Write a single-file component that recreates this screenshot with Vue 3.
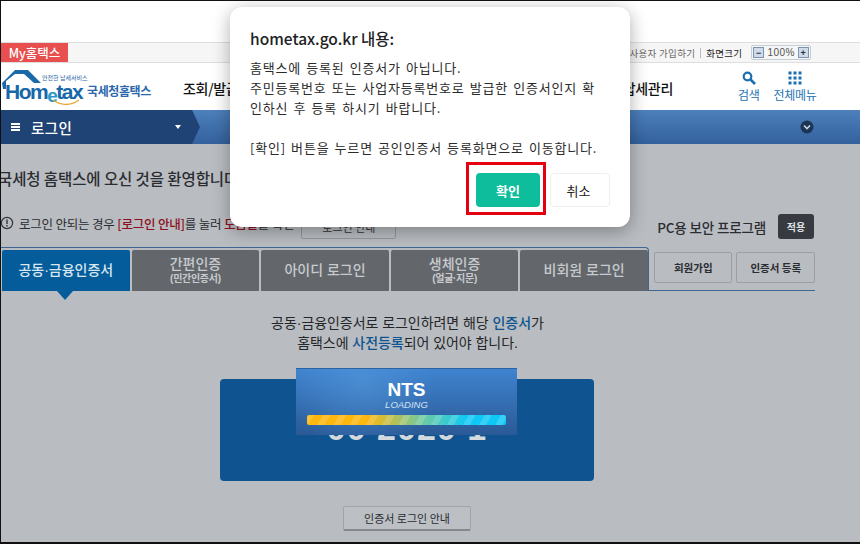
<template>
  <div class="screen">
    <div class="blank"></div>

    <div class="util-bar">
      <div class="my-tab">My홈택스</div>
      <div class="util-right">
        <span class="util-link">사용자 가입하기</span>
        <span class="util-sep"></span>
        <span class="util-size">화면크기</span>
        <span class="zoom-box">
          <span class="zoom-btn">−</span>
          <span class="zoom-val">100%</span>
          <span class="zoom-btn">+</span>
        </span>
      </div>
    </div>

    <header class="header">
      <div class="logo">
        <svg class="logo-house" width="42" height="22" viewBox="0 0 42 22">
          <path d="M1 15 L14 2 L27 2 L40 15 L33 15 L23 6 L14 6 L5 13 L5 21 L2 21 Z" fill="#1a6aa8" />
        </svg>
        <span class="logo-tag">안전한 납세서비스</span>
        <span class="logo-word">Hom<i>e</i>tax</span>
        <svg class="logo-smile" width="30" height="8" viewBox="0 0 30 8">
          <path d="M2 1 Q15 10 28 1" fill="none" stroke="#e9a93c" stroke-width="1.4" />
        </svg>
        <span class="logo-name">국세청홈택스</span>
      </div>
      <nav class="menu">
        <span v-for="m in menus" :key="m">{{ m }}</span>
      </nav>
      <div class="tools">
        <div class="tool">
          <svg width="14" height="14" viewBox="0 0 14 14">
            <circle cx="5.5" cy="5.5" r="3.8" fill="none" stroke="#1a6fb0" stroke-width="2.2" />
            <path d="M8.5 8.5 L13 13" stroke="#1a6fb0" stroke-width="2.6" />
          </svg>
          <span>검색</span>
        </div>
        <div class="tool">
          <svg width="14" height="14" viewBox="0 0 14 14" fill="#1a6fb0">
            <rect v-for="d in dots" :key="d.k" :x="d.x" :y="d.y" width="3" height="3" />
          </svg>
          <span>전체메뉴</span>
        </div>
      </div>
    </header>

    <div class="nav-bar">
      <div class="nav-login">
        <span class="burger"><i></i><i></i><i></i></span>
        <span class="nav-title">로그인</span>
        <span class="caret"></span>
      </div>
      <div class="nav-more">
        <svg width="14" height="14" viewBox="0 0 14 14">
          <circle cx="7" cy="7" r="6.5" fill="#1d3555" />
          <path d="M4 5.5 L7 8.5 L10 5.5" fill="none" stroke="#c9d5e4" stroke-width="1.6" />
        </svg>
      </div>
    </div>

    <main class="content">
      <h2 class="welcome">국세청 홈택스에 오신 것을 환영합니다</h2>

      <div class="info-row">
        <div class="info-left">
          <svg width="14" height="14" viewBox="0 0 14 14">
            <circle cx="6" cy="7" r="5.6" fill="none" stroke="#33363a" stroke-width="1.2" />
            <path d="M6 3.6 V8" stroke="#33363a" stroke-width="1.4" />
            <path d="M6 9 V10.4" stroke="#33363a" stroke-width="1.4" />
          </svg>
          <span>로그인 안되는 경우 <b>[로그인 안내]</b>를 눌러 <b>도움말</b>을 확인</span>
          <button class="guide-small">로그인 안내</button>
        </div>
        <div class="info-right">
          <span>PC용 보안 프로그램</span>
          <button class="apply">적용</button>
        </div>
      </div>

      <div class="tab-row">
        <div class="tabs">
          <div v-for="(t, i) in tabs" :key="t.main" class="tab" :class="{ active: i === 0 }">
            <span class="tab-main">{{ t.main }}</span>
            <span v-if="t.sub" class="tab-sub">{{ t.sub }}</span>
          </div>
        </div>
        <div class="tab-side">
          <button class="side-btn">회원가입</button>
          <button class="side-btn">인증서 등록</button>
        </div>
      </div>

      <p class="notice">
        공동·금융인증서로 로그인하려면 해당 <em>인증서</em>가<br />
        홈택스에 <em>사전등록</em>되어 있어야 합니다.
      </p>

      <div class="cert-wrap">
        <div class="cert-card">00 2020 1</div>
        <div class="loader">
          <div class="loader-title">NTS</div>
          <div class="loader-sub">LOADING</div>
          <div class="loader-bar"></div>
        </div>
      </div>

      <button class="guide-btn">인증서 로그인 안내</button>
    </main>

    <div class="dialog">
      <div class="dialog-title">hometax.go.kr 내용:</div>
      <div class="dialog-body">
        <p>홈택스에 등록된 인증서가 아닙니다.</p>
        <p>주민등록번호 또는 사업자등록번호로 발급한 인증서인지 확</p>
        <p>인하신 후 등록 하시기 바랍니다.</p>
        <p class="gap">[확인] 버튼을 누르면 공인인증서 등록화면으로 이동합니다.</p>
      </div>
      <div class="dialog-actions">
        <button class="ok">확인</button>
        <button class="cancel">취소</button>
      </div>
    </div>
  </div>
</template>

<script setup>
const menus = ['조회/발급', '납세관리'];

const tabs = [
  { main: '공동·금융인증서' },
  { main: '간편인증', sub: '(민간인증서)' },
  { main: '아이디 로그인' },
  { main: '생체인증', sub: '(얼굴·지문)' },
  { main: '비회원 로그인' },
];

const dots = [];
for (let r = 0; r < 3; r++) {
  for (let c = 0; c < 3; c++) {
    dots.push({ k: `${r}-${c}`, x: c * 5 + 0.5, y: r * 5 + 0.5 });
  }
}
</script>

<style>
html, body { margin: 0; background: #fff; }
</style>

<style scoped>
.screen {
  position: relative;
  width: 860px;
  height: 544px;
  box-sizing: border-box;
  border-top: 1px solid #111;
  border-left: 1px solid #111;
  border-bottom: 2px solid #111;
  overflow: hidden;
  display: flex;
  flex-direction: column;
  background: #fff;
  font-family: "Noto Sans CJK KR", "Noto Sans", sans-serif;
  color: #222;
}

button {
  font-family: inherit;
  cursor: pointer;
  padding: 0;
}

.blank { height: 41px; flex: none; }

/* top utility strip */
.util-bar {
  height: 19px;
  flex: none;
  display: flex;
  justify-content: space-between;
  background: #f6f6f6;
  border-top: 1px solid #dedede;
  border-bottom: 1px solid #dedede;
}
.my-tab {
  width: 67px;
  background: #e8504f;
  color: #fff;
  font-size: 12.5px;
  font-weight: 500;
  line-height: 20px;
  text-align: center;
}
.util-right {
  display: flex;
  align-items: center;
  font-size: 9.5px;
  letter-spacing: 0.3px;
  color: #666;
  padding-right: 49px;
}
.util-sep {
  width: 1px;
  height: 10px;
  background: #bbb;
  margin: 0 5px;
}
.util-size { color: #222; margin-right: 9px; }
.zoom-box {
  display: flex;
  align-items: center;
  gap: 3px;
  height: 13px;
  padding: 0 1px;
  border: 1px solid #c5cdd8;
  border-radius: 2px;
  font-family: "Liberation Sans", sans-serif;
  font-size: 10px;
  letter-spacing: 0.5px;
  color: #555;
}
.zoom-btn {
  width: 11px;
  height: 11px;
  line-height: 10px;
  text-align: center;
  background: #cfdbea;
  border: 1px solid #7d93ad;
  box-sizing: border-box;
  font-size: 9px;
  font-weight: 700;
  color: #234;
}

/* logo and main menu */
.header {
  height: 47px;
  flex: none;
  display: flex;
  align-items: center;
  background: #fff;
}
.logo {
  position: relative;
  width: 182px;
  height: 47px;
  flex: none;
}
.logo-house { position: absolute; left: 0; top: 5px; }
.logo-tag {
  position: absolute;
  left: 41px;
  top: 11px;
  font-size: 6px;
  line-height: 8px;
  color: #2a63a8;
}
.logo-word {
  position: absolute;
  left: 4px;
  top: 19px;
  font-family: "Liberation Sans", sans-serif;
  font-size: 21px;
  line-height: 20px;
  font-weight: 700;
  letter-spacing: -1.5px;
  color: #1668a8;
}
.logo-word i {
  font-style: normal;
  font-size: 19px;
  color: #2b97c9;
  position: relative;
  top: 3px;
}
.logo-smile { position: absolute; left: 50px; top: 36px; }
.logo-name {
  position: absolute;
  left: 86px;
  top: 19px;
  font-size: 12px;
  line-height: 18px;
  font-weight: 700;
  letter-spacing: -0.4px;
  color: #2c68ac;
  white-space: nowrap;
}
.menu {
  width: 490px;
  flex: none;
  display: flex;
  justify-content: space-between;
  padding-top: 3px;
  font-size: 14px;
  font-weight: 500;
  letter-spacing: -0.3px;
  color: #111;
  white-space: nowrap;
}
.tools {
  display: flex;
  margin-left: 65px;
  gap: 14px;
  font-size: 12px;
  color: #2273b3;
}
.tool {
  display: flex;
  flex-direction: column;
  align-items: center;
  gap: 3px;
  line-height: 14px;
  letter-spacing: -0.3px;
  white-space: nowrap;
}

/* blue navigation strip */
.nav-bar {
  height: 34px;
  flex: none;
  display: flex;
  justify-content: space-between;
  align-items: center;
  background: linear-gradient(#4d80bb, #33619d);
}
.nav-login {
  width: 199px;
  height: 34px;
  box-sizing: border-box;
  display: flex;
  align-items: center;
  padding: 0 19px 0 10px;
  background: #1e4374;
  color: #fff;
  clip-path: polygon(0 0, 191px 0, 199px 50%, 191px 100%, 0 100%);
}
.burger {
  display: flex;
  flex-direction: column;
  gap: 1.5px;
  width: 9px;
  margin-right: 11px;
}
.burger i { display: block; height: 1.5px; background: #fff; }
.nav-title {
  font-size: 14.5px;
  font-weight: 500;
  letter-spacing: 0.4px;
  flex: 1;
}
.caret {
  width: 0;
  height: 0;
  border-left: 3.5px solid transparent;
  border-right: 3.5px solid transparent;
  border-top: 4px solid #fff;
}
.nav-more {
  display: flex;
  padding-right: 46px;
}

/* page body */
.content {
  flex: 1;
  background: #b9bcc0;
  display: flex;
  flex-direction: column;
  min-height: 0;
}
.welcome {
  margin: 0 0 0 -3px;
  padding-top: 23px;
  font-size: 15.5px;
  line-height: 22px;
  font-weight: 500;
  letter-spacing: -0.1px;
  color: #2a2d31;
  white-space: nowrap;
}
.info-row {
  height: 54px;
  margin-top: 4px;
  display: flex;
  justify-content: space-between;
  align-items: flex-end;
  padding-right: 46px;
  box-sizing: border-box;
}
.info-left {
  display: flex;
  align-items: center;
  gap: 4px;
  font-size: 12.5px;
  color: #2a2d31;
  letter-spacing: -0.2px;
  white-space: nowrap;
  margin-bottom: 8px;
}
.info-left b { font-weight: 500; color: #8d1020; }
.guide-small {
  width: 95px;
  height: 24px;
  margin: 8px 0 0 3px;
  font-size: 11px;
  color: #333;
  background: #b9bcc0;
  border: 1px solid #95989c;
  border-radius: 2px;
}
.info-right {
  display: flex;
  align-items: center;
  gap: 12px;
  font-size: 13.5px;
  font-weight: 500;
  color: #2a2d31;
  margin-bottom: 8px;
  letter-spacing: -0.15px;
}
.apply {
  width: 36px;
  height: 25px;
  background: #373b41;
  color: #dfe1e4;
  border: none;
  border-radius: 3px;
  font-size: 10px;
  font-weight: 700;
}

.tab-row {
  display: flex;
  align-items: stretch;
  margin-right: 45px;
  height: 44px;
  box-sizing: border-box;
}
.tabs {
  position: relative;
  display: flex;
  gap: 2px;
  padding: 2px 0 0 1px;
  border-top: 1px solid #3d6790;
  border-right: 1px solid #3d6790;
  border-radius: 0 4px 0 0;
  box-sizing: border-box;
  height: 44px;
}
.tab {
  width: 127.6px;
  height: 41px;
  flex: none;
  display: flex;
  flex-direction: column;
  align-items: center;
  justify-content: center;
  background: #63676c;
  border-radius: 2px 2px 0 0;
  color: #c8cbce;
  font-family: "Liberation Sans", "Noto Sans CJK KR", sans-serif;
}
.tab.active {
  position: relative;
  background: #045c9b;
  color: #d8e6f0;
}
.tab.active::after {
  content: "";
  position: absolute;
  left: 55px;
  top: 41px;
  border-left: 8px solid transparent;
  border-right: 8px solid transparent;
  border-top: 9px solid #045c9b;
}
.tab-main {
  font-size: 14px;
  font-weight: 500;
  line-height: 17px;
}
.tab-sub {
  font-size: 10px;
  font-weight: 700;
  line-height: 12px;
  letter-spacing: -0.3px;
}
.tab-side {
  flex: 1;
  display: flex;
  align-items: flex-start;
  gap: 4px;
  padding: 5px 0 0 5px;
  border-bottom: 1px solid #3d6790;
  height: 44px;
  box-sizing: border-box;
}
.side-btn {
  flex: 1;
  height: 31px;
  background: #b9bcc0;
  border: 1px solid #9b9ea2;
  border-radius: 2px;
  font-size: 10.5px;
  font-weight: 700;
  color: #2a2d31;
}

.notice {
  margin: 22px 0 0;
  text-align: center;
  font-family: "Liberation Sans", "Noto Sans CJK KR", sans-serif;
  font-size: 14px;
  line-height: 20px;
  letter-spacing: -0.05px;
  color: #24262a;
  padding-right: 46px;
}
.notice em {
  font-style: normal;
  font-weight: 500;
  color: #0f5490;
}

.cert-wrap {
  position: relative;
  width: 374px;
  margin: 26px 0 0 219px;
}
.cert-card {
  height: 102px;
  box-sizing: border-box;
  padding-top: 29px;
  background: #0f5490;
  border-radius: 4px;
  color: #d4d9de;
  font-family: "Liberation Sans", sans-serif;
  font-size: 34px;
  font-weight: 700;
  line-height: 40px;
  letter-spacing: 1px;
  text-align: center;
  white-space: nowrap;
}
.loader {
  position: absolute;
  left: 76px;
  top: -11px;
  width: 221px;
  height: 67px;
  box-sizing: border-box;
  padding: 10px 11px 0;
  text-align: center;
  background:
    radial-gradient(circle at 30% 20%, rgba(90, 160, 225, 0.45), transparent 45%),
    linear-gradient(#3f83cf, #2a5a96);
  border-top: 1px solid #2c62a4;
}
.loader-title {
  font-family: "Liberation Sans", sans-serif;
  font-size: 19px;
  font-weight: 700;
  line-height: 21px;
  color: #fff;
}
.loader-sub {
  font-family: "Liberation Sans", sans-serif;
  font-size: 9.5px;
  font-style: italic;
  line-height: 10px;
  color: #d5e3f4;
}
.loader-bar {
  height: 10px;
  margin-top: 5px;
  border-radius: 2px;
  background:
    repeating-linear-gradient(120deg, rgba(255, 255, 255, 0.16) 0 6px, transparent 6px 14px),
    linear-gradient(90deg, #fdb70e 0%, #fdb70e 30%, #6fcaa0 58%, #10c8f5 80%, #10c8f5 100%);
}

.guide-btn {
  align-self: flex-start;
  width: 128px;
  height: 25px;
  margin: 25px 0 0 342px;
  background: #bcbfc3;
  border: 1px solid #a0a3a7;
  border-bottom: 2px solid #85888c;
  border-radius: 2px;
  font-size: 11px;
  color: #2a2d31;
}

/* browser confirm dialog floating over the page */
.dialog {
  position: absolute;
  left: 229px;
  top: 6px;
  width: 400px;
  height: 220px;
  box-sizing: border-box;
  padding: 20px;
  background: #fff;
  border-radius: 12px;
  box-shadow: 0 4px 18px rgba(0, 0, 0, 0.32);
}
.dialog-title {
  font-size: 15.5px;
  font-weight: 500;
  line-height: 22px;
  color: #202124;
}
.dialog-body {
  margin-top: 9px;
  font-size: 13px;
  line-height: 20px;
  letter-spacing: 0.8px;
  word-spacing: 1.5px;
  color: #2b2b2b;
  white-space: nowrap;
}
.dialog-body p { margin: 0; }
.dialog-body .gap { margin-top: 20px; }
.dialog-actions {
  display: flex;
  justify-content: flex-end;
  gap: 10px;
  margin-top: 15px;
}
.dialog-actions button {
  height: 34px;
  border-radius: 4px;
  font-size: 13px;
}
.ok {
  position: relative;
  width: 64px;
  background: #0dbd9c;
  border: none;
  color: #fff;
  font-weight: 700;
}
.ok::after {
  content: "";
  position: absolute;
  left: -10px;
  top: -11px;
  right: -6px;
  bottom: -8px;
  border: 3px solid #e4000f;
}
.cancel {
  width: 60px;
  padding-right: 3px;
  background: #fff;
  border: 1px solid #eee;
  color: #222;
}
</style>
